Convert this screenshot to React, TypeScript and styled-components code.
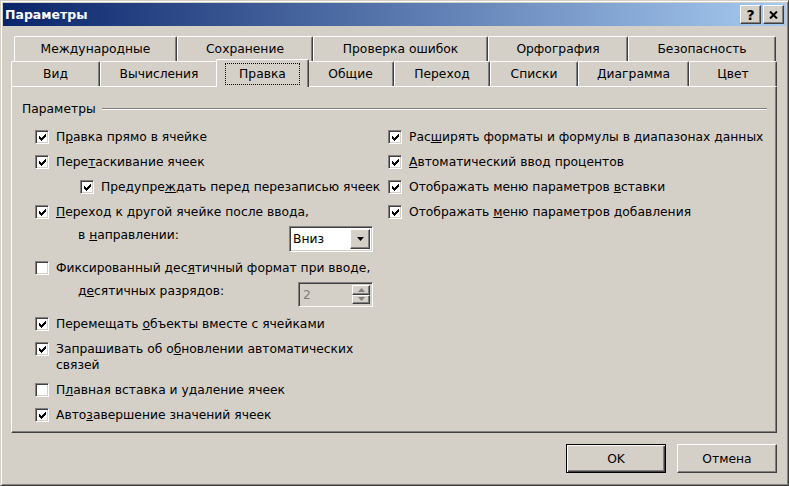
import React from "react";
import styled, { createGlobalStyle, css } from "styled-components";

const GlobalStyle = createGlobalStyle`
  html, body {
    margin: 0;
    padding: 0;
    background: #d4d0c8;
  }
  body {
    font-family: "DejaVu Sans", Tahoma, sans-serif;
    font-size: 12.3px;
    color: #000;
  }
`;

const raised = css`
  border-style: solid;
  border-width: 1px;
  border-color: #fff #404040 #404040 #fff;
  box-shadow: inset -1px -1px #808080;
`;

const sunken = css`
  border-style: solid;
  border-width: 1px;
  border-color: #808080 #fff #fff #808080;
  box-shadow: inset 1px 1px #404040, inset -1px -1px #d4d0c8;
`;

const topTabs = [
  { title: "Международные", w: 163 },
  { title: "Сохранение", w: 136 },
  { title: "Проверка ошибок", w: 175 },
  { title: "Орфография", w: 140 },
  { title: "Безопасность", w: 148 },
];

const bottomTabs = [
  { title: "Вид", w: 89 },
  { title: "Вычисления", w: 118 },
  { title: "Правка", w: 89, active: true },
  { title: "Общие", w: 87 },
  { title: "Переход", w: 96 },
  { title: "Списки", w: 88 },
  { title: "Диаграмма", w: 111 },
  { title: "Цвет", w: 88 },
];

const CheckMark = () => (
  <svg width="7" height="7" viewBox="0 0 7 7" shapeRendering="crispEdges">
    <path
      fill="#000"
      d="M6 0h1v1h-1z M5 1h2v1h-2z M0 2h1v1h-1z M4 2h3v1h-3z M0 3h2v1h-2z M3 3h3v1h-3z M0 4h5v1h-5z M1 5h3v1h-3z M2 6h1v1h-1z"
    />
  </svg>
);

const Check = ({ on }: { on?: boolean }) => <Box>{on && <CheckMark />}</Box>;

const App = () => {
  return (
    <>
      <GlobalStyle />
      <Window>
        <TitleBar>
          <Title>Параметры</Title>
          <CaptionButtons>
            <CaptionButton>
              <HelpGlyph>?</HelpGlyph>
            </CaptionButton>
            <CaptionButton>
              <svg width="9" height="8" viewBox="0 0 9 8">
                <path d="M1 0.5 L8 7.5 M8 0.5 L1 7.5" stroke="#000" strokeWidth="2" />
              </svg>
            </CaptionButton>
          </CaptionButtons>
        </TitleBar>

        <Body>
          <TabRow $offset={3}>
            {topTabs.map((t) => (
              <Tab key={t.title} $w={t.w}>
                {t.title}
              </Tab>
            ))}
          </TabRow>
          <TabRow $offset={0}>
            {bottomTabs.map((t) =>
              t.active ? (
                <Tab key={t.title} $w={t.w} $active>
                  <Focus>{t.title}</Focus>
                </Tab>
              ) : (
                <Tab key={t.title} $w={t.w}>
                  {t.title}
                </Tab>
              )
            )}
          </TabRow>

          <Panel>
            <GroupHead>
              <span>Параметры</span>
              <GroupRule />
            </GroupHead>

            <Columns>
              <Column>
                <CheckRow>
                  <Check on />
                  <Label>
                    П<Key>р</Key>авка прямо в ячейке
                  </Label>
                </CheckRow>
                <CheckRow>
                  <Check on />
                  <Label>
                    Пере<Key>т</Key>аскивание ячеек
                  </Label>
                </CheckRow>
                <CheckRow $indent={45}>
                  <Check on />
                  <Label>
                    Предупре<Key>ж</Key>дать перед перезаписью ячеек
                  </Label>
                </CheckRow>
                <CheckRow>
                  <Check on />
                  <Label>
                    <Key>П</Key>ереход к другой ячейке после ввода,
                  </Label>
                </CheckRow>
                <FieldRow>
                  <FieldLabel>
                    в <Key>н</Key>аправлении:
                  </FieldLabel>
                  <Select>
                    <SelectText>Вниз</SelectText>
                    <ArrowButton>
                      <svg width="7" height="4" viewBox="0 0 7 4">
                        <path d="M0 0 H7 L3.5 4 Z" fill="#000" />
                      </svg>
                    </ArrowButton>
                  </Select>
                </FieldRow>
                <CheckRow>
                  <Check />
                  <Label>
                    Фиксированный дес<Key>я</Key>тичный формат при вводе,
                  </Label>
                </CheckRow>
                <FieldRow>
                  <FieldLabel>
                    д<Key>е</Key>сятичных разрядов:
                  </FieldLabel>
                  <Spin>
                    <SpinText>2</SpinText>
                    <SpinButtons>
                      <SpinButton>
                        <svg width="7" height="4" viewBox="0 0 7 4">
                          <path d="M0 4 H7 L3.5 0 Z" fill="#808080" />
                        </svg>
                      </SpinButton>
                      <SpinButton>
                        <svg width="7" height="4" viewBox="0 0 7 4">
                          <path d="M0 0 H7 L3.5 4 Z" fill="#808080" />
                        </svg>
                      </SpinButton>
                    </SpinButtons>
                  </Spin>
                </FieldRow>
                <CheckRow>
                  <Check on />
                  <Label>
                    Перемещать <Key>о</Key>бъекты вместе с ячейками
                  </Label>
                </CheckRow>
                <CheckRow>
                  <Check on />
                  <Label>
                    Запрашивать об о<Key>б</Key>новлении автоматических
                    <br />
                    связей
                  </Label>
                </CheckRow>
                <CheckRow>
                  <Check />
                  <Label>
                    П<Key>л</Key>авная вставка и удаление ячеек
                  </Label>
                </CheckRow>
                <CheckRow>
                  <Check on />
                  <Label>
                    Авто<Key>з</Key>авершение значений ячеек
                  </Label>
                </CheckRow>
              </Column>

              <Column>
                <CheckRow>
                  <Check on />
                  <Label>
                    Рас<Key>ш</Key>ирять форматы и формулы в диапазонах данных
                  </Label>
                </CheckRow>
                <CheckRow>
                  <Check on />
                  <Label>
                    <Key>А</Key>втоматический ввод процентов
                  </Label>
                </CheckRow>
                <CheckRow>
                  <Check on />
                  <Label>
                    Отображать меню параметров <Key>в</Key>ставки
                  </Label>
                </CheckRow>
                <CheckRow>
                  <Check on />
                  <Label>
                    Отображать <Key>м</Key>еню параметров добавления
                  </Label>
                </CheckRow>
              </Column>
            </Columns>
          </Panel>

          <Footer>
            <Button $default>OK</Button>
            <Button>Отмена</Button>
          </Footer>
        </Body>
      </Window>
    </>
  );
};

export default App;

const Window = styled.div`
  width: 789px;
  height: 486px;
  box-sizing: border-box;
  border: 1px solid;
  border-color: #d4d0c8 #404040 #404040 #d4d0c8;
  box-shadow: inset 1px 1px #fff, inset -1px -1px #808080;
  padding: 2px;
  display: flex;
  flex-direction: column;
  background: #d4d0c8;
`;

const TitleBar = styled.div`
  height: 23px;
  flex: none;
  display: flex;
  align-items: center;
  justify-content: space-between;
  padding: 0 2px 0 2px;
  background: linear-gradient(to right, #0a246a, #a6caf0);
`;

const Title = styled.span`
  color: #fff;
  font-weight: bold;
  font-size: 12.5px;
`;

const CaptionButtons = styled.div`
  display: flex;
  gap: 2px;
`;

const CaptionButton = styled.div`
  width: 21px;
  height: 19px;
  box-sizing: border-box;
  background: #d4d0c8;
  ${raised};
  display: flex;
  align-items: center;
  justify-content: center;
`;

const HelpGlyph = styled.span`
  font-weight: bold;
  font-size: 14px;
  line-height: 14px;
  font-family: "DejaVu Sans", sans-serif;
`;

const Body = styled.div`
  flex: 1;
  display: flex;
  flex-direction: column;
  padding: 10px 9px 0 8px;
`;

const TabRow = styled.div<{ $offset: number }>`
  display: flex;
  height: 25px;
  padding-left: ${(p) => p.$offset}px;
`;

const Tab = styled.div<{ $w: number; $active?: boolean }>`
  width: ${(p) => (p.$active ? p.$w + 4 : p.$w)}px;
  height: ${(p) => (p.$active ? 28 : 25)}px;
  margin: ${(p) => (p.$active ? "-2px -2px -1px -2px" : "0")};
  box-sizing: border-box;
  flex: none;
  border-top: 1px solid #fff;
  border-left: 1px solid #fff;
  border-right: 1px solid #404040;
  border-radius: 2px 2px 0 0;
  box-shadow: inset -1px 0 #808080;
  background: #d4d0c8;
  display: flex;
  align-items: center;
  justify-content: center;
  white-space: nowrap;
  position: ${(p) => (p.$active ? "relative" : "static")};
  z-index: ${(p) => (p.$active ? 1 : "auto")};
`;

const Focus = styled.span`
  padding: 3px 13px;
  outline: 1px dotted #000;
`;

const Panel = styled.div`
  height: 347px;
  flex: none;
  box-sizing: border-box;
  border-top: 1px solid #fff;
  border-left: 1px solid #fff;
  border-right: 1px solid #404040;
  border-bottom: 1px solid #404040;
  box-shadow: inset -1px -1px #808080;
  padding: 14px 9px 0 10px;
`;

const GroupHead = styled.div`
  display: flex;
  align-items: center;
  gap: 6px;
  line-height: 16px;
`;

const GroupRule = styled.div`
  flex: 1;
  border-top: 1px solid #808080;
  border-bottom: 1px solid #fff;
`;

const Columns = styled.div`
  display: grid;
  grid-template-columns: 353px 1fr;
  margin-top: 8px;
  padding-left: 13px;
`;

const Column = styled.div`
  display: flex;
  flex-direction: column;
`;

const CheckRow = styled.div<{ $indent?: number }>`
  display: flex;
  align-items: flex-start;
  gap: 7px;
  padding: 4px 0 5px ${(p) => p.$indent || 0}px;
`;

const Box = styled.span`
  width: 14px;
  height: 14px;
  margin-top: 1px;
  flex: none;
  box-sizing: border-box;
  background: #fff;
  ${sunken};
  display: flex;
  align-items: center;
  justify-content: center;
`;

const Label = styled.span`
  line-height: 16px;
  white-space: nowrap;
`;

const Key = styled.span`
  text-decoration: underline;
`;

const FieldRow = styled.div`
  width: 338px;
  height: 31px;
  box-sizing: border-box;
  display: flex;
  align-items: flex-start;
  justify-content: space-between;
  padding-left: 43px;
`;

const FieldLabel = styled.span`
  line-height: 16px;
  padding-top: 2px;
  white-space: nowrap;
`;

const Select = styled.div`
  width: 84px;
  height: 26px;
  margin-top: 1px;
  box-sizing: border-box;
  background: #fff;
  ${sunken};
  padding: 2px;
  display: flex;
  align-items: center;
`;

const SelectText = styled.span`
  flex: 1;
  padding-left: 1px;
`;

const ArrowButton = styled.span`
  width: 20px;
  height: 100%;
  box-sizing: border-box;
  background: #d4d0c8;
  ${raised};
  display: flex;
  align-items: center;
  justify-content: center;
`;

const Spin = styled.div`
  width: 75px;
  height: 25px;
  margin-top: 1px;
  box-sizing: border-box;
  background: #d4d0c8;
  ${sunken};
  padding: 2px;
  display: flex;
  align-items: center;
`;

const SpinText = styled.span`
  flex: 1;
  padding-left: 2px;
  color: #808080;
`;

const SpinButtons = styled.div`
  width: 18px;
  height: 100%;
  display: flex;
  flex-direction: column;
`;

const SpinButton = styled.span`
  flex: 1;
  box-sizing: border-box;
  background: #d4d0c8;
  ${raised};
  display: flex;
  align-items: center;
  justify-content: center;
`;

const Footer = styled.div`
  display: flex;
  justify-content: flex-end;
  gap: 11px;
  margin-top: 11px;
`;

const Button = styled.div<{ $default?: boolean }>`
  width: 100px;
  height: 29px;
  box-sizing: border-box;
  display: flex;
  align-items: center;
  justify-content: center;
  background: #d4d0c8;
  ${(p) =>
    p.$default
      ? css`
          border: 1px solid #000;
          box-shadow: inset 1px 1px #fff, inset -1px -1px #404040,
            inset -2px -2px #808080;
        `
      : raised};
`;
